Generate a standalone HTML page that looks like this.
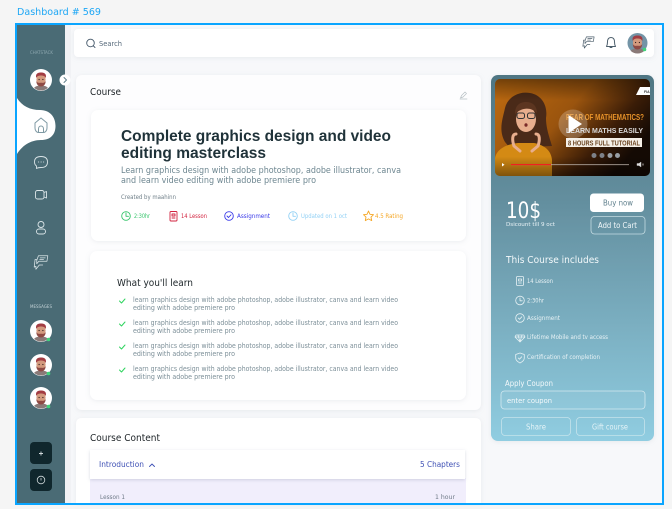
<!DOCTYPE html>
<html><head><meta charset="utf-8"><title>Dashboard # 569</title>
<style>
html,body{margin:0;padding:0;background:#f5f5f5;width:672px;height:509px;overflow:hidden}
svg{display:block;filter:blur(.35px)}
text{font-family:"DejaVu Sans","Liberation Sans",sans-serif}
.b{font-family:"Liberation Sans",sans-serif;font-weight:700}
.ic{fill:none;stroke-linecap:round;stroke-linejoin:round}
</style></head><body>
<svg width="672" height="509" viewBox="0 0 672 509" xmlns="http://www.w3.org/2000/svg">
<defs>
<linearGradient id="pg" x1="0" y1="0" x2="0" y2="1"><stop offset="0" stop-color="#4f7683"/><stop offset=".35" stop-color="#648f9f"/><stop offset="1" stop-color="#90cde1"/></linearGradient>
<linearGradient id="vg" x1="0" y1="0" x2="1" y2=".55"><stop offset="0" stop-color="#c06c10"/><stop offset=".5" stop-color="#9a540e"/><stop offset=".8" stop-color="#3a1c07"/><stop offset="1" stop-color="#140a04"/></linearGradient>
<linearGradient id="vt" x1="0" y1="0" x2="0" y2="1"><stop offset="0" stop-color="#000" stop-opacity=".4"/><stop offset=".22" stop-color="#000" stop-opacity="0"/><stop offset=".8" stop-color="#000" stop-opacity="0"/><stop offset="1" stop-color="#000" stop-opacity=".4"/></linearGradient>
<filter id="s" x="-10%" y="-10%" width="120%" height="130%"><feDropShadow dx="0" dy="1" stdDeviation="2.500" flood-color="#9aa5b1" flood-opacity=".18"/></filter>
<filter id="s2" x="-10%" y="-10%" width="120%" height="130%"><feDropShadow dx="0" dy="1" stdDeviation="1.500" flood-color="#7a86a0" flood-opacity=".3"/></filter>
<clipPath id="vc"><rect x="495" y="79" width="155" height="97" rx="5"/></clipPath>
<clipPath id="ac"><circle cx="0" cy="0" r="10"/></clipPath>
<g id="face">
<g clip-path="url(#ac)">
<path d="M-8 11C-8 6-4 5 0 5S8 6 8 11Z" fill="#8a7a78"/>
<ellipse cx="0" cy="-.8" rx="4.600" ry="5.800" fill="#d39a7e"/>
<path d="M-4.800 -2.500C-5.800 -7-3 -8 0 -8S5.800 -7 4.800 -2.500C4 -4.500 2 -5 0 -5S-4 -4.500-4.800 -2.500Z" fill="#a23c42"/>
<path d="M-4.700 .5C-4.700 4.500-2 6 0 6S4.700 4.500 4.700 .5C3.500 2.800 2 2.300 0 2.300S-3.500 2.800-4.700 .5Z" fill="#8f4a44"/>
<circle cx="-1.900" cy="-1" r=".6" fill="#2b1a1a"/><circle cx="1.900" cy="-1" r=".6" fill="#2b1a1a"/>
</g>
</g>
<g id="chat2">
<path d="M-3-8H8L7-1.500H-2.500L-5 1.500V-2.500Z M-1-5.500H5M-1.500-3.500H3"/>
<path d="M-5-3.500H-7L-8 5.500 -6 4.500V8L-2 3H2"/>
</g>
</defs>

<rect width="672" height="509" fill="#f5f5f5"/>
<text x="17" y="15" font-size="10" fill="#1ea7f5" textLength="84" lengthAdjust="spacingAndGlyphs">Dashboard  # 569</text>

<!-- frame -->
<rect x="16" y="24" width="647" height="480" fill="#f7f8fa" stroke="#0aa5ff" stroke-width="2"/>

<!-- sidebar -->
<rect x="17" y="25" width="48" height="478" fill="#4a6b75"/>
<rect x="65" y="25" width="6" height="478" fill="#eef0f2" opacity=".7"/>
<path d="M17 98C22 106 30 110 40 110C50 110 55.500 117 55.500 126C55.500 135 50 140 41 140C30 140 22 146 17 154Z" fill="#fff"/>
<text x="30" y="54" font-size="4" fill="#8fa9b1" textLength="23" lengthAdjust="spacingAndGlyphs">CHATSTACK</text>
<circle cx="41" cy="80" r="11" fill="#fff"/><use href="#face" transform="translate(41 80.500)"/>
<circle cx="65" cy="80" r="5.500" fill="#fff"/>
<path class="ic" d="M64 77.500L66.500 80L64 82.500" stroke="#5d7c87" stroke-width=".9"/>

<g class="ic" stroke="#7f9aa4" stroke-width="1"><path d="M35 128V123L41 118L47 123V128C47 131 45 132.500 43.500 132.500H38.500C37 132.500 35 131 35 128Z"/><path d="M38.500 132.500V129C38.500 125 43.500 125 43.500 129V132.500"/></g>
<g class="ic" stroke="#dbe5e8" stroke-width=".9">
<path d="M41 156.500C46 156.500 47.500 159 47.500 162C47.500 165 46 167.500 41 167.500C39.500 167.500 38 167.500 36.500 168.500V166C35 165 34.500 163.500 34.500 162C34.500 159 36 156.500 41 156.500Z"/>
<path d="M38.500 162H38.700M41 162H41.200M43.500 162H43.700"/>
<rect x="35.500" y="190.500" width="8.500" height="8.500" rx="2"/><path d="M44 192.500L46.500 191.500V198L44 197"/>
<circle cx="41" cy="224.500" r="3"/><rect x="36.500" y="229" width="9" height="5" rx="2.500"/>
<use href="#chat2" transform="translate(41 262.500) scale(.85)"/>
</g>
<text x="30" y="308" font-size="4" fill="#c3d2d6" textLength="22" lengthAdjust="spacingAndGlyphs">MESSAGES</text>
<g><circle cx="41" cy="331" r="11" fill="#fff"/><use href="#face" transform="translate(41 331.500)"/><circle cx="48.500" cy="339.500" r="1.800" fill="#3fd47a"/></g>
<g><circle cx="41" cy="365" r="11" fill="#fff"/><use href="#face" transform="translate(41 365.500)"/><circle cx="48.500" cy="373.500" r="1.800" fill="#3fd47a"/></g>
<g><circle cx="41" cy="398" r="11" fill="#fff"/><use href="#face" transform="translate(41 398.500)"/><circle cx="48.500" cy="406.500" r="1.800" fill="#3fd47a"/></g>
<rect x="30" y="442" width="22" height="22" rx="4" fill="#10272d"/>
<rect x="30" y="469" width="22" height="22" rx="4" fill="#10272d"/>
<path d="M39 453.500H43M41 451.500V455.500" stroke="#cfd8da" stroke-width=".9"/>
<circle cx="41" cy="480" r="3.800" fill="none" stroke="#cfd8da" stroke-width=".8"/><path d="M41 478V480.500" stroke="#cfd8da" stroke-width=".8"/>

<!-- search -->
<rect x="74" y="29" width="580" height="28" rx="4" fill="#fff" filter="url(#s)"/>
<g class="ic" stroke="#44586a" stroke-width=".9"><circle cx="90.500" cy="43" r="3.800"/><path d="M93.300 45.800L95 47.500"/></g>
<text x="99" y="46.200" font-size="7" fill="#56697a" textLength="23" lengthAdjust="spacingAndGlyphs">Search</text>
<g class="ic" stroke="#4d5f6c" stroke-width="1"><use href="#chat2" transform="translate(588.500 42.500) scale(.7)"/>
<path d="M611 37.500C613.500 37.500 614.500 39.500 614.500 42C614.500 44 615 45.500 615.500 46.500H606.500C607 45.500 607.500 44 607.500 42C607.500 39.500 608.500 37.500 611 37.500ZM610 47.500H612"/></g>
<circle cx="637.500" cy="43" r="10" fill="#7394a6"/><use href="#face" transform="translate(637.500 43.500)"/><circle cx="644.500" cy="49.500" r="1.800" fill="#3fd47a"/>

<!-- course card -->
<rect x="76" y="75" width="405" height="335" rx="6" fill="#fdfdfe" filter="url(#s)"/>
<text x="90" y="95" font-size="10" fill="#1d2327" textLength="31" lengthAdjust="spacingAndGlyphs">Course</text>
<path class="ic" d="M460.500 98L461.500 95.500L465 92L466.500 93.500L463 97ZM460 99H467" stroke="#b5bec3" stroke-width=".7"/>

<!-- hero -->
<rect x="91" y="110" width="375" height="131" rx="7" fill="#fff" filter="url(#s)"/>
<text class="b" x="121" y="141" font-size="15.500" fill="#1f3239" textLength="270" lengthAdjust="spacingAndGlyphs">Complete graphics design and video</text>
<text class="b" x="121" y="158" font-size="15.500" fill="#1f3239" textLength="145" lengthAdjust="spacingAndGlyphs">editing masterclass</text>
<text x="121" y="173" font-size="9" fill="#6d8690" textLength="280" lengthAdjust="spacingAndGlyphs">Learn graphics design with adobe photoshop, adobe illustrator, canva</text>
<text x="121" y="183" font-size="9" fill="#6d8690" textLength="195" lengthAdjust="spacingAndGlyphs">and learn video editing with adobe premiere pro</text>
<text x="121" y="199" font-size="6" fill="#6f7f88" textLength="55" lengthAdjust="spacingAndGlyphs">Created by maahinn</text>

<g class="ic" stroke-width=".9">
<g stroke="#34c46a"><circle cx="126" cy="216" r="4.300"/><path d="M126 213V216.300H128.500"/></g>
<g stroke="#d2233f"><rect x="170" y="211.500" width="7" height="9.500" rx="1"/><path d="M172 214H175V216H172ZM172 218H175"/></g>
<g stroke="#3a3ae8"><circle cx="229" cy="216" r="4.300"/><path d="M227 216L228.500 217.500L231 214.800"/></g>
<g stroke="#93d1f5"><circle cx="293" cy="216" r="4.300"/><path d="M293 213V216.300H295.500"/></g>
<path stroke="#f5a623" d="M368.500 211L370 214.300L373.500 214.700L371 217.100L371.700 220.600L368.500 218.900L365.300 220.600L366 217.100L363.500 214.700L367 214.300Z"/>
</g>
<g font-size="6">
<text x="134" y="218" fill="#34c46a" textLength="16" lengthAdjust="spacingAndGlyphs">2:30hr</text>
<text x="181" y="218" fill="#d2233f" textLength="26" lengthAdjust="spacingAndGlyphs">14 Lesson</text>
<text x="237" y="218" fill="#3a3ae8" textLength="33" lengthAdjust="spacingAndGlyphs">Assignment</text>
<text x="301" y="218" fill="#93d1f5" textLength="46" lengthAdjust="spacingAndGlyphs">Updated on 1 oct</text>
<text x="375" y="218" fill="#f5a623" textLength="28" lengthAdjust="spacingAndGlyphs">4.5 Rating</text>
</g>

<!-- learn -->
<rect x="90" y="251" width="376" height="149" rx="7" fill="#fff" filter="url(#s)"/>
<text x="117" y="286" font-size="10" fill="#20282c" textLength="76" lengthAdjust="spacingAndGlyphs">What you'll learn</text>
<g class="ic" stroke="#2fd45f" stroke-width="1">
<path d="M119.500 301L121.500 303L125 299"/><path d="M119.500 324L121.500 326L125 322"/><path d="M119.500 347L121.500 349L125 345"/><path d="M119.500 370L121.500 372L125 368"/>
</g>
<g font-size="7" fill="#7c8f98">
<text x="133" y="302" textLength="265" lengthAdjust="spacingAndGlyphs">learn graphics design with adobe photoshop, adobe illustrator, canva and learn video</text>
<text x="133" y="310" textLength="102" lengthAdjust="spacingAndGlyphs">editing with adobe premiere pro</text>
<text x="133" y="325" textLength="265" lengthAdjust="spacingAndGlyphs">learn graphics design with adobe photoshop, adobe illustrator, canva and learn video</text>
<text x="133" y="333" textLength="102" lengthAdjust="spacingAndGlyphs">editing with adobe premiere pro</text>
<text x="133" y="348" textLength="265" lengthAdjust="spacingAndGlyphs">learn graphics design with adobe photoshop, adobe illustrator, canva and learn video</text>
<text x="133" y="356" textLength="102" lengthAdjust="spacingAndGlyphs">editing with adobe premiere pro</text>
<text x="133" y="371" textLength="265" lengthAdjust="spacingAndGlyphs">learn graphics design with adobe photoshop, adobe illustrator, canva and learn video</text>
<text x="133" y="379" textLength="102" lengthAdjust="spacingAndGlyphs">editing with adobe premiere pro</text>
</g>

<!-- content -->
<path d="M76 503V424Q76 418 82 418H475Q481 418 481 424V503Z" fill="#fff" filter="url(#s)"/>
<text x="90" y="441" font-size="10" fill="#1d2327" textLength="70" lengthAdjust="spacingAndGlyphs">Course Content</text>
<rect x="90" y="478" width="376" height="25" fill="#f1eefc"/>
<rect x="90" y="450" width="375" height="29" fill="#fff" filter="url(#s2)"/>
<text x="99" y="467" font-size="8" fill="#3f51b5" textLength="45" lengthAdjust="spacingAndGlyphs">Introduction</text>
<path class="ic" d="M149.500 466.500L152 464L154.500 466.500" stroke="#3f51b5" stroke-width=".9"/>
<text x="420" y="467" font-size="8" fill="#3f51b5" textLength="40" lengthAdjust="spacingAndGlyphs">5 Chapters</text>
<text x="100" y="499" font-size="6.500" fill="#6f7a88" textLength="25" lengthAdjust="spacingAndGlyphs">Lesson 1</text>
<text x="435" y="499" font-size="6.500" fill="#6f7a88" textLength="20" lengthAdjust="spacingAndGlyphs">1 hour</text>

<!-- right panel -->
<rect x="491" y="75" width="163" height="366" rx="7" fill="url(#pg)" filter="url(#s)"/>
<g clip-path="url(#vc)">
<rect x="495" y="79" width="155" height="97" fill="url(#vg)"/>
<path d="M505 142C498 130 503 118 505 108C508 96 520 91 530 93C542 95 548 106 546 118C546 128 549 136 552 146L510 148Z" fill="#4a2a18"/>
<path d="M495 176V158C497 148 508 144 518 143H534C544 145 551 150 552 160L552 176Z" fill="#d48a14"/>
<ellipse cx="526" cy="119" rx="10" ry="13" fill="#e8ae8d"/>
<path d="M515 114C515 105 520 102 526 102C533 102 537 106 537 113C531 107 522 107 515 114Z" fill="#5c3520"/>
<path class="ic" d="M516 134C512 134 512 140 514 146L520 151M536 134C540 134 540 140 538 146L532 151" stroke="#e8ae8d" stroke-width="3"/>
<rect x="517" y="113" width="7.500" height="5.500" rx="2" fill="none" stroke="#333" stroke-width="1"/><rect x="527.500" y="113" width="7.500" height="5.500" rx="2" fill="none" stroke="#333" stroke-width="1"/>
<ellipse cx="526" cy="125" rx="1.600" ry="1.800" fill="#7a2a28"/>
<rect x="495" y="79" width="155" height="97" fill="url(#vt)"/>
<path d="M636 95L640 87H650V95Z" fill="#fff"/>
<text x="644" y="93" font-size="3.500" fill="#333" class="b">FIA</text>
<text class="b" x="566" y="120" font-size="8.500" fill="#e8932a" textLength="78" lengthAdjust="spacingAndGlyphs">FEAR OF MATHEMATICS?</text>
<text class="b" x="566" y="133" font-size="7.500" fill="#d9d9d9" textLength="77" lengthAdjust="spacingAndGlyphs">LEARN MATHS EASILY</text>
<rect x="566" y="138" width="76" height="9" fill="#f5f0e8"/>
<text class="b" x="568" y="145.500" font-size="7" fill="#6a4320" textLength="72" lengthAdjust="spacingAndGlyphs">8 HOURS FULL TUTORIAL</text>
<circle cx="594" cy="155.500" r="2.500" fill="#7d8188"/><circle cx="602" cy="155.500" r="2.500" fill="#7d8188"/><circle cx="610" cy="155.500" r="2.500" fill="#999ea4"/><circle cx="617.500" cy="155.500" r="2.500" fill="#999ea4"/>
<circle cx="573" cy="124" r="14.500" fill="#fff" opacity=".22"/>
<path d="M568.500 115L582 124L568.500 133Z" fill="#fff"/>
<path d="M502 163V166.500L504.500 164.800Z" fill="#fff"/>
<rect x="511" y="164.300" width="118" height=".8" fill="#b9b0a8"/>
<rect x="511" y="164" width="40" height="1.200" fill="#f02020"/>
<path d="M637 163.500H639L641 162V167L639 165.500H637ZM642 163.500L644 165.500M644 163.500L642 165.500" fill="#ddd" stroke="#ddd" stroke-width=".4"/>
</g>

<text x="506" y="218" font-size="22" fill="#fff" textLength="35" lengthAdjust="spacingAndGlyphs">10$</text>
<text x="506" y="226" font-size="5" fill="#eaf4f7" textLength="49" lengthAdjust="spacingAndGlyphs">Dsicount till 9  oct</text>
<rect x="590" y="193.500" width="54" height="18.500" rx="3.500" fill="#fff"/>
<text x="603" y="205.500" font-size="7.500" fill="#5f7f8c" textLength="30" lengthAdjust="spacingAndGlyphs">Buy now</text>
<rect x="591" y="216.500" width="54" height="17.500" rx="3.500" fill="none" stroke="#c4dbe2" stroke-width=".8"/>
<text x="598" y="227.800" font-size="7.500" fill="#f1f7f9" textLength="39" lengthAdjust="spacingAndGlyphs">Add to Cart</text>
<text x="506" y="263" font-size="10" fill="#f2f8fa" textLength="93" lengthAdjust="spacingAndGlyphs">This Course includes</text>

<g class="ic" stroke="#e6f1f4" stroke-width=".8">
<rect x="516.500" y="276.500" width="7" height="9" rx="1"/><path d="M518.500 279H521.500V281H518.500ZM518.500 283H521.500"/>
<circle cx="520" cy="300.500" r="4.300"/><path d="M520 298V300.800H522.300"/>
<circle cx="520" cy="318" r="4.300"/><path d="M518.200 318L519.500 319.300L521.800 316.800"/>
<path d="M516 335H524L525 337L520 342L515 337ZM515 337H525M518 335L520 342L522 335"/>
<path d="M520 353L524.300 354.500V358C524.300 360.500 522 362 520 363C518 362 515.700 360.500 515.700 358V354.500ZM518.300 358L519.500 359.200L521.700 356.800"/>
</g>
<g font-size="6" fill="#e8f2f5">
<text x="527" y="283" textLength="26" lengthAdjust="spacingAndGlyphs">14 Lesson</text>
<text x="527" y="302.500" textLength="17" lengthAdjust="spacingAndGlyphs">2:30hr</text>
<text x="527" y="320" textLength="33" lengthAdjust="spacingAndGlyphs">Assignment</text>
<text x="527" y="339" textLength="81" lengthAdjust="spacingAndGlyphs">Lifetime Mobile and tv access</text>
<text x="527" y="359" textLength="73" lengthAdjust="spacingAndGlyphs">Certification of completion</text>
</g>
<text x="505" y="386" font-size="7.500" fill="#f2f8fa" textLength="48" lengthAdjust="spacingAndGlyphs">Apply Coupon</text>
<rect x="501" y="391" width="144" height="18" rx="3.500" fill="#ffffff" fill-opacity=".05" stroke="#d3e9f0" stroke-width=".8"/>
<text x="507" y="403" font-size="7" fill="#f4f9fb" textLength="45" lengthAdjust="spacingAndGlyphs">enter coupon</text>
<rect x="501.500" y="417.500" width="69" height="18" rx="3.500" fill="none" stroke="#c5e3ec" stroke-width=".8"/>
<rect x="576.500" y="417.500" width="68" height="18" rx="3.500" fill="none" stroke="#c5e3ec" stroke-width=".8"/>
<text x="526" y="429.500" font-size="7.500" fill="#e4f3f7" textLength="20" lengthAdjust="spacingAndGlyphs">Share</text>
<text x="592" y="429.500" font-size="7.500" fill="#e4f3f7" textLength="36" lengthAdjust="spacingAndGlyphs">Gift course</text>

<!-- redraw frame on top -->
<rect x="16" y="24" width="647" height="480" fill="none" stroke="#0aa5ff" stroke-width="2"/>
</svg>
</body></html>
